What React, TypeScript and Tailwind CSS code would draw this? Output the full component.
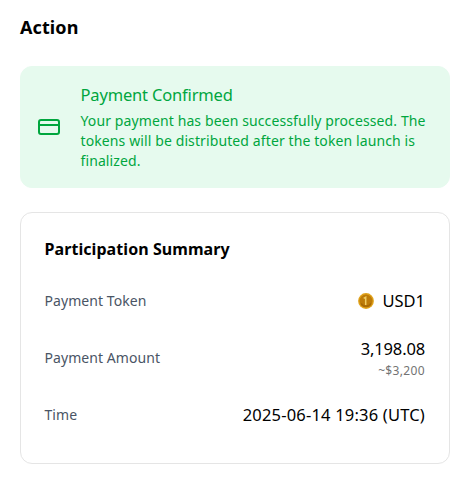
import React from 'react';
import { CreditCard } from 'lucide-react';

interface SummaryRowProps {
  label: string;
  children: React.ReactNode;
}

const SummaryRow: React.FC<SummaryRowProps> = ({ label, children }) => (
  <div className="flex items-center justify-between py-3">
    <span className="-ml-[0.5px] text-[14px] leading-5 tracking-[0.07px] text-gray-600">{label}</span>
    {children}
  </div>
);

// Small gold coin used next to the USD1 ticker
const CoinIcon: React.FC = () => (
  <svg width="16" height="16" viewBox="0 0 16 16" fill="none">
    <circle cx="8" cy="8" r="7.9" fill="#e0a21a" />
    <circle cx="8" cy="8" r="6.5" fill="#bd7b08" />
    <path d="M3 10.5a5.8 5.8 0 0 0 10 0" stroke="#a96a05" strokeWidth="1.5" />
    <path d="M5.7 5.4 7.7 4.2v7.8" stroke="#f0cd62" strokeWidth="1.5" />
  </svg>
);

const App: React.FC = () => {
  return (
    <div className="min-h-screen bg-white px-5 pt-3 pr-[17px] font-['Noto_Sans','Open_Sans',sans-serif] text-black">
      <h2 className="mb-[24px] text-[18px] leading-[30px] font-bold tracking-[0.1px]">Action</h2>

      {/* Payment status */}
      <div className="mb-6 flex items-center gap-5 rounded-xl border border-[#e6faee] bg-[#e6faee] p-4 text-[#00a63e]">
        <CreditCard size={24} className="shrink-0" />
        <div className="-ml-[0.5px] whitespace-nowrap">
          <h3 className="mb-1 text-[16.5px] leading-6 tracking-[-0.17px]">Payment Confirmed</h3>
          <p className="text-[14px] leading-5 tracking-[0.11px]">
            Your payment has been successfully processed. The
            <br />
            tokens will be distributed after the token launch is
            <br />
            finalized.
          </p>
        </div>
      </div>

      {/* Summary */}
      <div className="rounded-xl border border-neutral-200 p-6">
        <h3 className="mb-4 -ml-[0.5px] text-[16px] leading-6 font-bold tracking-[0.07px]">Participation Summary</h3>
        <SummaryRow label="Payment Token">
          <div className="flex items-center gap-2">
            <CoinIcon />
            <span className="text-[16.5px] leading-6">USD1</span>
          </div>
        </SummaryRow>
        <SummaryRow label="Payment Amount">
          <div className="text-right">
            <div className="text-[16.5px] leading-6 tracking-[-0.15px]">3,198.08</div>
            <div className="pt-px text-[12px] leading-[17px] tracking-[0.35px] text-neutral-500">~$3,200</div>
          </div>
        </SummaryRow>
        <SummaryRow label="Time">
          <span className="text-[16.5px] leading-6 tracking-[0.19px]">2025-06-14 19:36 (UTC)</span>
        </SummaryRow>
      </div>
    </div>
  );
};

export default App;
